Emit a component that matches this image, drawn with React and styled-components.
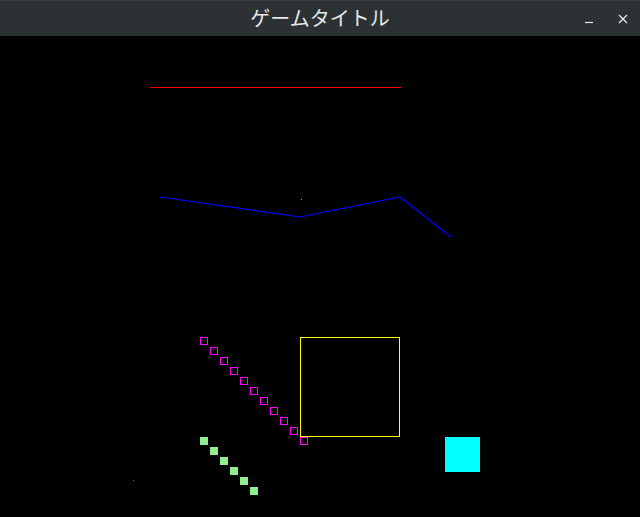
import React from "react";
import styled, { createGlobalStyle } from "styled-components";

const GlobalStyle = createGlobalStyle`
  html, body {
    margin: 0;
    padding: 0;
    background: #000;
    overflow: hidden;
  }
`;

const Window = styled.div`
  width: 640px;
  height: 517px;
  display: flex;
  flex-direction: column;
  background: #000;
`;

const TitleBar = styled.div`
  height: 36px;
  flex: none;
  display: grid;
  grid-template-columns: 1fr auto 1fr;
  align-items: center;
  background: #2c3134;
  border-top: 1px solid #3a3f42;
  box-sizing: border-box;
`;

const Title = styled.div`
  grid-column: 2;
  color: #e6e8e8;
  font-family: "Noto Sans CJK JP", "Noto Sans", sans-serif;
  font-size: 20px;
  line-height: 36px;
  margin-top: -1px;
`;

const Controls = styled.div`
  grid-column: 3;
  justify-self: end;
  display: flex;
  align-items: center;
  gap: 16px;
  padding-right: 8px;
`;

const ControlButton = styled.button`
  width: 18px;
  height: 18px;
  padding: 0;
  border: none;
  background: transparent;
  display: grid;
  place-items: center;
  svg {
    display: block;
  }
`;

const Canvas = styled.svg`
  display: block;
  flex: 1;
  width: 640px;
  background: #000;
`;

const magenta = Array.from({ length: 11 }, (_, i) => i);
const greens = Array.from({ length: 6 }, (_, i) => i);

export default function App() {
  return (
    <Window>
      <GlobalStyle />
      <TitleBar>
        <Title>ゲームタイトル</Title>
        <Controls>
          <ControlButton aria-label="minimize">
            <svg width="10" height="10" viewBox="0 0 10 10">
              <path d="M1 8.5 H9" stroke="#e6e8e8" strokeWidth="1.2" />
            </svg>
          </ControlButton>
          <ControlButton aria-label="close">
            <svg width="10" height="10" viewBox="0 0 10 10">
              <path d="M1 1 L9 9 M9 1 L1 9" stroke="#e6e8e8" strokeWidth="1.3" />
            </svg>
          </ControlButton>
        </Controls>
      </TitleBar>
      {/* game canvas, origin at y=36 of the window */}
      <Canvas viewBox="0 36 640 481">
        <line x1="150" y1="87.5" x2="401" y2="87.5" stroke="#ff0000" strokeWidth="1" />
        <polyline
          points="160,197 300,217 400,197 451,237"
          fill="none"
          stroke="#0000ff"
          strokeWidth="1.2"
        />
        <rect x="301" y="199" width="1" height="1" fill="#00ff00" />
        <rect x="133" y="480" width="1" height="1" fill="#00c000" />
        {magenta.map((i) => (
          <rect
            key={i}
            x={200.5 + i * 10}
            y={337.5 + i * 10}
            width="7"
            height="7"
            fill="none"
            stroke="#ff00ff"
            strokeWidth="1"
            shapeRendering="crispEdges"
          />
        ))}
        <rect
          x="300.5"
          y="337.5"
          width="99"
          height="99"
          fill="none"
          stroke="#ffff00"
          strokeWidth="1"
          shapeRendering="crispEdges"
        />
        {greens.map((i) => (
          <rect
            key={i}
            x={200 + i * 10}
            y={437 + i * 10}
            width="8"
            height="8"
            fill="#90ee90"
            shapeRendering="crispEdges"
          />
        ))}
        <rect x="445" y="437" width="35" height="35" fill="#00ffff" shapeRendering="crispEdges" />
      </Canvas>
    </Window>
  );
}
